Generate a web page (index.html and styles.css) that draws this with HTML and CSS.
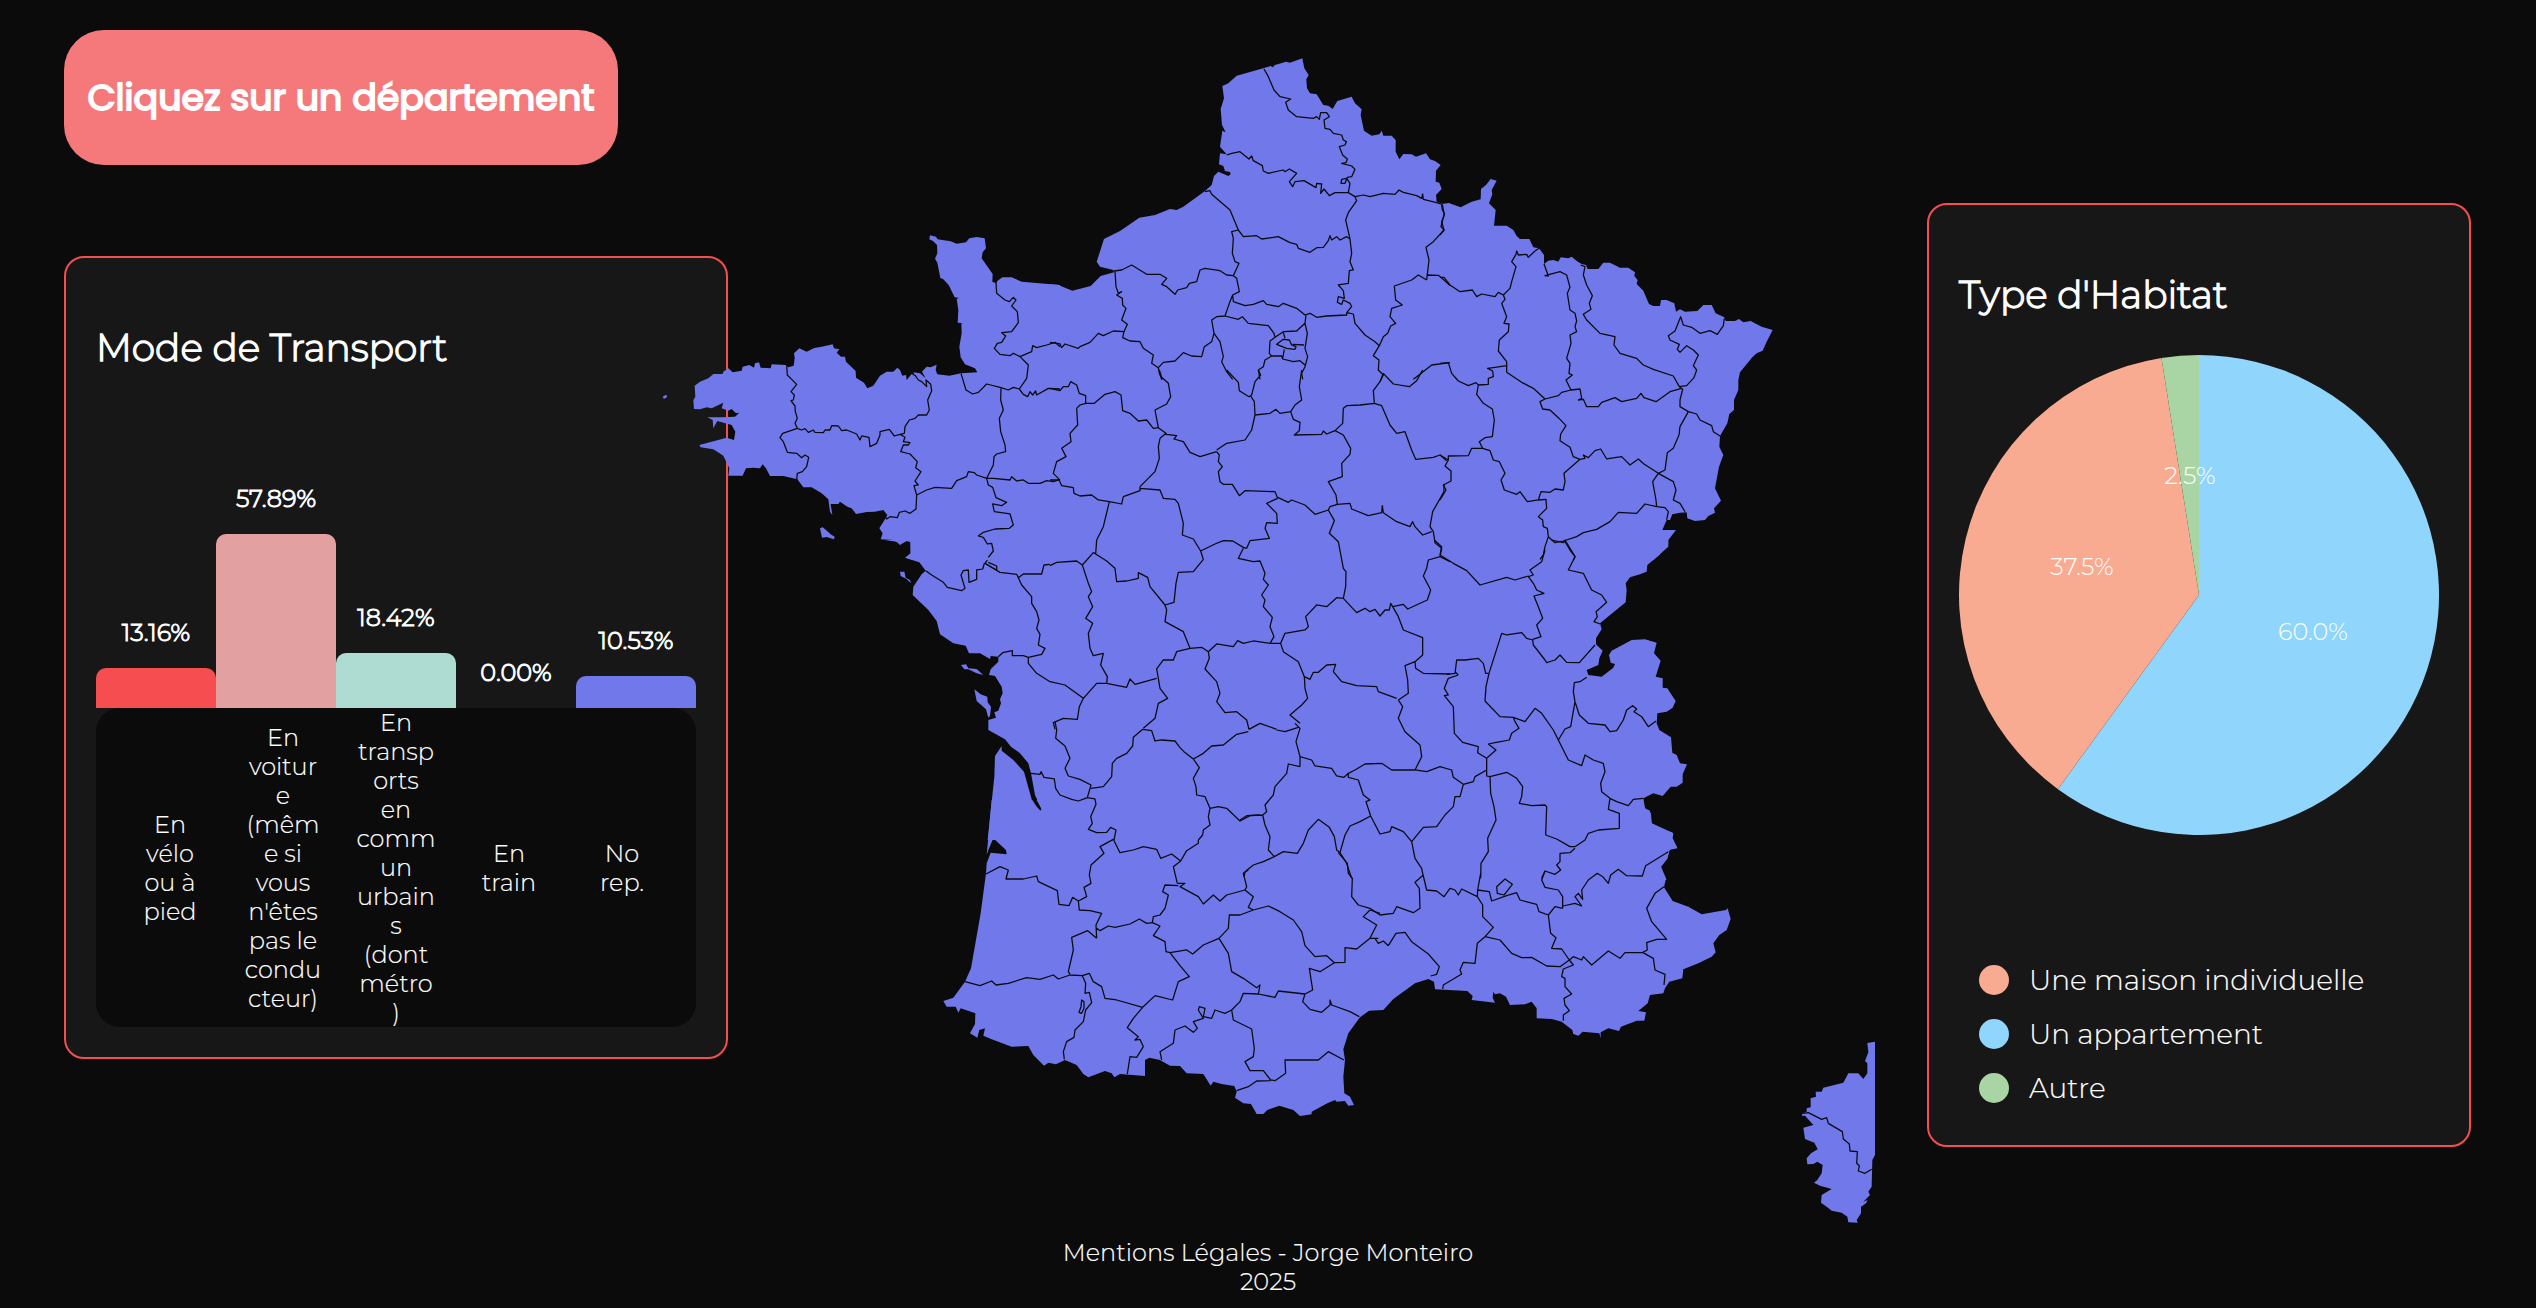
FILE: index.html
```html
<!DOCTYPE html>
<html lang="fr">
<head>
<meta charset="utf-8">
<title>Carte des départements</title>
<link rel="stylesheet" href="styles.css">
</head>
<body>
<main class="page">
  <section class="side">
    <h1 class="prompt"><span>Cliquez sur un département</span></h1>
    <article class="card transport">
      <h2 class="card-title">Mode de Transport</h2>
      <div class="bars">
        <div class="bar-col"><span class="bar-value">13.16%</span><div class="bar bike" style="height:40px"></div></div>
        <div class="bar-col"><span class="bar-value">57.89%</span><div class="bar car" style="height:174px"></div></div>
        <div class="bar-col"><span class="bar-value">18.42%</span><div class="bar transit" style="height:55px"></div></div>
        <div class="bar-col"><span class="bar-value">0.00%</span><div class="bar train" style="height:0"></div></div>
        <div class="bar-col"><span class="bar-value">10.53%</span><div class="bar none" style="height:32px"></div></div>
      </div>
      <div class="bar-labels">
        <span>En<br>vélo<br>ou à<br>pied</span>
        <span>En<br>voitur<br>e<br>(mêm<br>e si<br>vous<br>n'êtes<br>pas le<br>condu<br>cteur)</span>
        <span>En<br>transp<br>orts<br>en<br>comm<br>un<br>urbain<br>s<br>(dont<br>métro<br>)</span>
        <span>En<br>train</span>
        <span>No<br>rep.</span>
      </div>
    </article>
  </section>

  <svg class="map" viewBox="660 40 1215 1195" width="1215" height="1195">
    <g class="land">
      <path transform="translate(660 200) scale(.33333)" d="M1200,255 1085,245 1055,232 1027,232 1013,242 1008,250 997,245 998,222 965,175 968,157 978,145 974,115 950,111 928,115 918,127 890,131 872,124 833,118 828,110 810,106 808,118 820,124 831,135 832,160 825,176 832,188 841,234 850,238 866,255 884,292 897,294 890,297 895,330 893,368 914,370 904,369 905,400 898,440 902,472 915,493 945,505 952,517 903,520 868,527 832,523 827,510 830,494 812,502 800,500 786,515 797,535 780,520 760,517 767,530 755,522 740,540 738,525 727,527 720,510 712,503 700,515 680,515 660,527 640,557 622,565 612,548 588,533 587,513 558,485 555,470 543,470 530,458 538,448 522,445 518,433 485,440 463,444 440,455 418,445 402,460 404,475 401,497 385,502 378,495 335,493 332,505 302,503 297,487 285,490 282,503 268,495 248,500 245,512 218,517 205,505 190,515 188,522 160,522 145,535 120,545 104,557 106,590 100,600 102,627 120,628 140,622 155,625 190,608 185,625 205,632 215,627 228,640 238,638 225,650 180,652 142,652 158,660 160,685 172,663 215,675 226,695 222,720 200,713 118,735 122,742 160,748 190,767 208,805 205,827 248,827 258,805 280,803 300,805 308,793 318,805 330,828 370,828 412,838 430,862 455,862 485,880 505,898 510,935 517,945 512,912 535,912 540,905 562,920 575,925 588,942 620,936 645,935 670,930 682,945 675,958 658,985 668,1000 662,1018 700,1020 720,1032 735,1022 751,1025 752,1060 737,1073 760,1080 1200,1080ZM8,590 18,584 22,590 12,597ZM480,985 488,982 504,995 512,1003 524,1010 522,1018 500,1011 486,1013Z"/>
      <path transform="translate(1050 40) scale(.33333)" d="M0,733 25,735 67,752 122,738 152,708 192,697 190,690 150,680 140,665 162,597 210,573 268,533 315,525 360,507 380,510 400,500 465,453 485,435 492,408 505,395 535,408 542,403 540,396 525,393 520,378 507,373 510,340 530,343 510,320 517,272 527,277 516,255 512,207 522,175 517,138 535,130 560,107 640,85 662,78 668,82 675,75 708,65 720,68 757,55 763,85 776,105 769,118 771,145 780,160 800,163 820,195 835,197 848,207 862,183 905,170 915,190 935,208 932,225 942,272 965,287 988,283 995,272 1000,287 1025,287 1037,300 1037,335 1048,358 1060,342 1085,343 1098,350 1128,340 1140,358 1155,363 1172,375 1158,392 1157,425 1168,428 1175,447 1158,465 1160,485 1180,493 1200,490 1200,1035 0,1035Z"/>
      <path transform="translate(1440 160) scale(.33333)" d="M0,132 28,130 62,142 95,125 122,118 123,87 138,75 152,57 170,62 155,90 157,103 147,130 167,150 162,197 200,197 220,210 230,228 240,237 268,237 280,262 297,265 312,285 312,312 325,302 340,300 355,305 362,292 385,295 395,290 410,303 425,312 438,315 443,327 475,327 490,308 510,308 540,323 565,323 585,337 583,348 593,360 590,372 610,392 627,432 640,438 660,438 663,420 680,420 703,430 708,455 720,448 735,455 772,453 790,435 815,435 827,460 853,472 857,483 885,483 897,477 910,487 932,483 965,500 998,510 980,545 968,572 950,580 937,592 900,637 895,660 895,690 882,720 882,750 868,762 862,790 840,828 838,860 850,885 837,920 825,985 843,1022 822,1045 825,1058 805,1068 795,1080 765,1083 742,1075 740,1057 720,1058 697,1063 690,1080 680,1080 667,1110 708,1110 685,1140 685,1160 640,1200 0,1200Z"/>
      <path transform="translate(1050 370) scale(.33333)" d="M0,0H1210V1080H0Z"/>
      <path transform="translate(860 540) scale(.33333)" d="M75,0 110,5 120,15 140,3 152,5 152,40 135,53 178,67 197,92 185,103 160,140 158,165 205,210 230,243 240,283 280,310 317,317 327,340 360,340 390,357 392,348 415,350 415,365 392,388 387,405 405,408 425,440 428,460 420,478 423,490 415,512 403,517 408,533 385,540 385,570 435,598 453,620 480,640 505,670 513,700 525,765 545,808 540,813 517,785 492,695 460,660 425,632 425,618 405,648 403,710 383,900 1200,900 1200,0ZM303,375 318,373 325,385 350,387 370,405 350,400 325,388 313,388ZM343,448 362,463 382,470 383,487 393,500 390,527 385,533 378,508 350,483ZM120,95 133,95 137,113 150,120 153,130 140,117 122,108Z"/>
      <path transform="translate(1240 540) scale(.33333)" d="M0,0 1283,0 1285,10 1258,45 1222,75 1220,95 1200,103 1170,112 1157,130 1160,150 1157,187 1080,250 1085,268 1068,295 1068,313 1088,332 1078,355 1075,375 1040,390 1045,405 1085,410 1120,383 1125,372 1112,368 1107,345 1115,332 1175,300 1215,298 1250,308 1242,340 1262,362 1247,410 1268,415 1268,443 1282,445 1307,483 1298,503 1280,515 1252,520 1250,550 1258,570 1293,592 1297,638 1310,645 1320,670 1341,673 1328,703 1328,728 1310,740 1292,740 1268,768 1240,760 1210,775 1215,805 1230,812 1235,850 1275,868 1300,880 1298,895 1312,925 1287,930 1283,955 1263,980 1270,1005 1280,1020 0,1020Z"/>
      <path transform="translate(920 800) scale(.33333)" d="M215,0 337,0 350,20 362,33 365,27 350,0 1380,0 1380,628 1350,630 1320,652 1285,700 1270,748 1275,780 1270,830 1273,880 1290,890 1302,915 1285,917 1275,903 1250,905 1245,900 1222,910 1175,935 1175,943 1140,948 1120,930 1078,917 1042,930 1030,942 1010,942 993,912 970,910 945,893 950,875 943,858 905,852 880,845 872,857 850,822 800,820 780,798 750,797 720,780 688,773 675,780 675,828 600,822 583,832 575,820 555,813 505,832 490,822 470,795 435,780 408,793 385,788 372,797 340,765 325,738 275,740 215,718 190,707 195,685 178,690 172,713 150,700 165,672 166,640 122,625 115,638 107,620 80,620 70,603 100,593 135,545 153,505 182,340 198,220 200,190 212,158 260,163 258,150 220,115 205,150 200,165Z"/>
      <path transform="translate(1360 800) scale(.33333)" d="M0,0 847,0 857,30 873,40 875,70 910,90 937,97 935,112 952,143 930,148 922,175 903,200 918,235 912,262 938,303 985,320 1025,343 1098,330 1103,325 1112,357 1100,390 1078,405 1060,430 1067,457 1055,470 1015,490 970,508 967,535 928,545 915,565 910,580 870,585 863,610 835,633 858,637 853,662 830,662 783,680 777,693 745,685 722,697 722,715 718,700 668,695 655,707 640,702 637,690 605,665 575,657 530,655 530,625 515,605 495,613 450,615 438,590 420,580 405,583 400,575 398,593 405,608 335,600 338,588 322,573 225,568 222,545 205,537 165,550 100,597 70,630 25,632 0,650Z"/>
      <path transform="translate(1780 1020) scale(.33333)" d="M262,69 285,65 285,405 277,420 275,500 265,515 270,525 250,545 263,540 258,550 243,560 243,580 230,600 233,608 205,607 202,590 185,578 155,572 140,560 123,548 125,525 155,507 120,497 102,488 112,480 125,460 128,435 112,425 100,432 82,433 80,415 93,400 113,388 103,368 75,357 70,323 100,315 75,287 65,287 68,280 80,275 80,265 92,262 92,235 108,230 107,215 125,215 130,203 190,188 205,160 235,160 250,177 262,160 262,130 255,123 265,97Z"/>
    </g>
    <g class="borders">
      <!-- Bretagne, Normandie -->
      <path transform="translate(660 200) scale(.33333)" d="M380,495 382,525 395,538 410,553 393,575 403,585 400,600 393,602 405,618 406,635 412,655 405,670 412,685M412,685 368,700 360,713 370,725 382,757 410,760 425,773 435,765 446,772 440,800 427,815 412,820 410,840M412,685 425,690 435,686 445,697 460,690 465,697 490,698 495,690 510,690 515,677 535,678 545,692 560,690 590,702 600,720 605,708 627,712 630,740 650,730 660,705 660,695 688,688 703,708 720,703M720,703 733,700 735,680 748,660 765,655 775,645 800,645 808,630 803,600 815,572 812,553 798,540 800,560 785,545 775,540 765,525M720,703 735,712 730,725 750,728 745,735 730,735 722,755 750,762 772,785 767,803 783,815 765,843 775,855 762,857 770,885M770,885 768,927 750,940 735,933 718,937 712,953 690,950 680,957 672,943M770,885 800,870 825,862 875,865 890,842 920,830 925,815 943,818 950,825 980,835M903,520 918,570 938,582 955,577 980,552 1023,563M1023,563 1022,600 1030,630 1018,655 1022,695 1035,735 1037,755 1010,762 1002,770 1000,795 985,825 980,835M1008,247 1010,280 1035,300 1048,305 1060,292 1068,300 1055,318 1072,335 1075,368 1055,395 1025,398 1037,408 1025,427 1012,430 1003,445 1020,463 1050,467 1060,460 1080,470M1080,470 1105,495 1100,535 1078,567M1023,563 1045,570 1060,562 1078,567M1078,567 1090,583 1103,590 1110,575 1118,585 1127,573 1130,585 1165,565 1200,567M1080,470 1115,455 1118,437 1130,443 1160,435 1185,427 1200,440M980,835 1000,835 1050,840 1055,830 1070,843 1090,840 1105,850 1140,850 1160,842 1180,845 1200,838M980,835 985,855 998,862 1008,893 1040,907 1025,917 998,912 1003,935 1050,942 1060,975 1048,985 1005,987 970,997 955,1008 970,1012 982,1032 995,1030 1000,1053 985,1072"/>
      <!-- Hauts-de-France, Île-de-France -->
      <path transform="translate(1050 40) scale(.33333)" d="M642,87 655,110 672,150 690,170 722,177 707,187 715,210 740,230 790,235 800,230 808,238 812,218 830,218 838,230 822,240 825,265 840,268 850,280 875,285 880,300 889,305 885,315 868,320 878,345 892,357 888,368 875,370 905,378 915,388 905,410 892,412 885,430 873,430 875,418 890,415 900,430 895,458M530,345 545,340 570,335 597,357 605,348 610,362 637,377 640,393 655,400 700,390 705,395 718,387 740,400 718,425 728,440 735,425 762,422 798,443 800,430 815,432 812,460 822,447 838,467 855,458 895,458M895,458 915,470 940,465 960,470 1000,460 1035,463 1047,450 1060,457 1100,467 1115,475 1118,462 1120,478 1160,488 1177,493M465,455 480,452 485,463 540,510 565,570M565,570 580,590 620,587 635,597 685,590 720,608 740,613 745,625 780,637 800,623 820,622 835,602 840,587 845,600 860,590 870,600 890,590 900,597M915,470 920,482 895,518 887,540 895,575 900,597M900,597 905,640 900,665 910,690 898,692 895,730 865,735 880,752 883,775 865,770 862,787 875,793 880,780 900,790 905,800 890,818M565,570 545,575 550,595 547,640 555,665 567,670 550,707M192,693 215,690 245,675 290,703 330,703 350,715 335,733 350,740 375,763 383,750 410,743 418,730 440,725 450,690 465,685 510,692 530,705 550,707M550,707 560,715 568,755 548,765 550,785M550,785 585,797 610,793 640,782 650,793 685,800 700,790 740,805 765,825M765,825 780,820 800,832 830,828 890,825 890,818M195,695 198,740 205,760 215,755 200,765 217,775 218,795 228,805 215,840 232,853 222,875M0,907 30,912 35,923 45,912 85,925 90,920 120,907 145,880 160,887 190,873 222,875M222,875 218,893 240,903 270,905 280,925 310,945 305,970 325,983M325,983 340,967 375,963 400,938 425,948 455,950 463,920 485,905 492,880M548,765 538,790 525,828M492,880 485,840 500,830 525,828M525,828 565,838 577,830 595,850 655,857 672,880 675,892M492,880 510,905 520,950 515,965 530,995 548,1018M325,983 328,1000 336,1020M675,892 700,875 740,873 765,850 768,825M675,892 660,903 658,940 665,948M680,913 700,898 718,900 725,915 738,920 735,928 710,925ZM700,878 705,895M728,913 762,915M703,928 698,955M665,948 645,960 640,980 625,990 630,1018M665,948 695,948 698,957 730,965 750,962 765,975M765,850 772,880 765,925 773,950 765,980 755,1000 758,1018M890,818 910,822 915,850 945,885 975,905 988,917M988,917 1000,890 1013,880 1022,858 1037,850 1020,830 1025,805 1057,795 1037,780 1033,738 1085,720 1105,705 1130,720M1177,493 1183,525 1175,545 1182,570 1150,605 1128,622 1137,660 1130,720M1130,705 1165,706 1182,720 1200,737M988,917 970,947 987,960 985,990 1000,1005 990,1025M1090,1018 1110,1003 1145,975 1200,968"/>
      <!-- Grand Est, Franche-Comté -->
      <path transform="translate(1440 160) scale(.33333)" d="M5,135 7,150 13,160 3,200 12,210 0,225M297,265 285,273 265,292 260,283 235,285 230,273 228,283 215,305 228,320 215,365 210,385 190,405M0,352 12,352 30,375 60,395 97,390 110,410 125,402 165,410 175,397 190,405M190,405 195,418 185,430 200,470 192,490 207,492 205,515 178,540 175,573 200,605M312,312 325,348 315,347 360,335 380,345 390,382 382,400 390,450 405,460 410,483 405,500 410,515 390,525 393,550 380,595 390,610 387,640 397,645 378,660 393,690M422,315 435,320 430,345 440,375 457,407 448,430 453,448 430,463 440,480 480,520 525,530 522,555 540,580 590,595 610,615 640,628 700,648 718,680M853,475 850,497 832,523 810,512 780,520 755,502 730,495 722,470 705,513 685,527 690,540 718,553 712,568 720,577 740,557 760,570 775,585 760,617 770,630 762,653 740,677 718,680M200,605 200,637 245,667 280,685 315,717M315,717 355,707 365,697 393,690M0,610 25,608 35,640 55,663 85,677 108,668 115,675M115,675 145,673 145,655 160,650 158,633 143,625 165,622 200,617M393,690 420,687 425,715 415,720 430,718 440,740 475,740 485,727 525,713 545,725 590,715 603,700 612,713 648,725 690,695 725,685M718,680 728,688 720,720 720,740 745,755M745,755 770,762 780,780 815,797 820,815 840,828M745,755 720,800 717,825 700,865 682,878 675,930 655,940M315,717 300,725 308,747 330,750 355,773 378,797 362,822 360,842 390,862 400,890 420,898M420,898 435,895 430,885 445,893 465,872 482,867 500,897 545,890 570,915 595,897 612,912 655,940M115,675 110,703 130,730 157,747 163,780 157,830 135,833 118,845 128,865M0,885 25,900 25,888 85,887 95,865 128,865M128,865 150,872 160,900 178,905 195,940 183,960 193,990 230,1003 240,995 262,1025 295,1020M420,898 372,940 375,965 370,990 345,987 330,997 303,995 295,1020M295,1020 318,1018 320,1045 295,1070 308,1080 310,1100 322,1105 325,1130M325,1130 345,1148 370,1143 410,1130 430,1118 470,1108 510,1085 535,1057 590,1060 615,1032 650,1040M655,940 638,965 648,1020 650,1040M655,940 700,965 708,990 700,1020 720,1030 735,1055M650,1040 675,1043 685,1055 680,1080M325,1130 315,1160 310,1185 300,1198M375,1145 390,1170 405,1190 400,1200M25,900 15,918 33,933 33,963 10,975 18,990 0,1020"/>
      <!-- Centre, Pays de la Loire, Bourgogne -->
      <path transform="translate(1050 370) scale(.33333)" d="M0,55 30,62 40,50 55,50 62,35 80,45 88,70 107,77 107,100M107,100 90,105 80,115 83,165 60,190 63,215 35,235 48,260 20,275 10,310 25,325M0,330 25,330M107,100 133,100 165,73 195,65 213,75 218,122 240,130 265,153 290,150 310,175 325,173M328,0 335,22 355,40 362,80 350,102 315,120 325,173M325,173 348,190 330,205M348,193 380,197 372,207 400,215 420,247 450,260 500,245M330,205 325,230 328,265 315,305 270,350M25,325 35,347 70,353 72,370 90,378 125,375 145,390 178,395M178,395 215,402 220,380 270,362 270,350M270,355 330,360 340,385 375,388 385,400 400,460 397,495 430,507 452,543M178,395 160,470 140,510 137,552M500,245 508,255 505,275 517,290 505,305 510,335 520,343 547,343 568,377 585,362 675,365 683,385M500,240 530,220 585,210 605,180 615,135M530,0 565,37 568,62 597,80 605,75 615,35 632,15 625,0M602,78 613,95 615,135M615,135 660,130 678,118 690,130 722,125M755,0 748,50 755,90 735,105 722,125M722,125 730,148 750,157 748,182 733,195 815,193 820,183 830,192 855,182M855,182 878,160 880,115 890,107 930,105 973,100M1000,10 990,35 970,62 973,100M1000,10 1030,42 1078,50 1100,32 1118,0M973,100 995,107 1020,165 1040,190 1065,185 1085,240 1097,268 1150,262 1170,255 1190,272M855,182 880,195 902,235 900,253 875,280 877,320 835,335 858,375 862,403M683,382 715,397 725,390 765,405 795,433 835,420 840,410 862,403M683,385 650,400 680,430 682,460 650,458 645,475 658,505 600,512 590,535M452,543 495,522 520,512 548,513 580,532 590,535M862,403 900,400 905,417 955,437 995,428 997,407 1000,428 1040,455 1080,470 1088,455 1095,470 1118,495 1145,485M1182,342 1182,365 1148,425 1140,470 1150,485M1150,485 1155,518 1175,535 1170,560M1170,560 1135,570 1130,595 1120,618 1142,660 1132,690 1073,717 1060,703 1028,710M1170,560 1200,575M835,420 853,452 838,490 865,515 880,595 888,605 887,650 880,685M580,535 565,565 610,575 630,573 645,610 640,628 655,645 635,675 645,690 640,710 667,742 660,770 672,800 660,820M452,543 460,568 430,605 385,607 378,640 372,697 345,705M137,552 170,573 195,595 200,635 230,633 265,625 265,608 293,622 300,650 345,705M0,587 20,577 80,573 97,585M97,585 130,548 137,552M97,585 115,640 125,665 115,680 128,710 107,745 128,760 115,790 120,835 130,857 160,850 152,885 172,920 170,940M345,705 350,720 345,755 400,785 420,835M170,940 230,952 240,927 255,943 320,925M420,835 380,845 370,870 340,870 320,897 325,925M420,835 455,832 475,845 500,822 550,830 563,812 580,820 610,813 660,820 692,820M692,820 705,790 765,780 775,770 767,740 800,705 830,710 860,683 880,685M880,685 920,728 945,715 960,725 975,718 990,738 1005,720 1018,720 1022,700 1028,710M1028,710 1045,740 1060,780 1118,803 1118,855 1095,875M692,820 700,845 745,875 763,920M763,920 780,928 790,907 805,907 830,885 857,883 850,905 875,935 920,947 980,950 985,965 1040,985M1095,875 1065,887 1073,930 1075,970 1045,990M1095,875 1097,895 1120,910 1200,912M475,845 478,865 465,897 500,935 510,970 500,995 525,1028 560,1025 590,1050 597,1078M763,920 765,955 773,985 755,1005 720,1035 750,1060M597,1078 630,1060 680,1078M0,935 45,945 100,985M100,985 140,940 170,940M100,985 88,1010 82,1048 40,1045 10,1058 15,1078M325,925 330,955 353,985 325,1000 315,1045 280,1075"/>
      <!-- Vendée, Charentes, Dordogne -->
      <path transform="translate(860 540) scale(.33333)" d="M197,92 215,105 250,127 262,142 305,152 315,145 303,105 310,92 325,90 327,127 350,118 350,90 368,87 373,70M382,60 375,70 410,90 410,78 385,67M375,70 420,97 470,103 475,113M475,113 490,102 545,102 552,75 570,73M475,113 485,135 515,170 515,190 530,215 537,240 530,265 540,283 535,315 555,325 545,343 505,352M415,350 428,338 457,332 457,347 490,347 505,352M505,352 505,370 530,400 570,425M585,545 590,570 587,595 615,618 630,655 615,685 625,708M513,700 540,703 543,695 552,712 583,717 587,745 600,765 635,778 655,783 682,773M625,708 660,718 693,735 682,773M693,745 730,740 755,710 757,670 770,655 800,640 818,618 820,592 848,568M682,773 705,777 708,793 692,830 697,850 685,868 710,878 740,877 752,862 768,870 762,900M848,568 875,572 885,603 905,600 945,603 960,623 972,635 1000,657M1000,657 1030,640 1055,618 1090,615 1130,583 1165,575M1000,657 1018,683 1000,715 1008,740 1010,765 1035,770 1050,805M1050,805 1075,800 1100,805 1140,843 1170,827 1200,825M1050,805 1045,830 1050,855 1030,870 1028,885 1015,900"/>
      <!-- Auvergne, Rhône-Alpes -->
      <path transform="translate(1240 540) scale(.33333)" d="M165,550 180,565 168,605 180,650 180,680M110,570 135,575 175,562M180,650 215,660 225,678 275,685 290,708 312,712 325,700M180,680 145,672 140,700 105,740 100,765 75,795 80,815 68,825M0,840 20,827 68,825M68,825 75,855 90,890 85,930 103,950M103,950 130,935 172,940 190,910 205,870 235,838 268,862 283,890 290,930 300,938M103,950 70,965 40,975 15,995 12,1010M325,700 345,690 375,672 425,670 455,690 525,690M325,700 325,712 355,720 370,765 390,780 378,785 392,828M392,828 360,845 330,858 315,885 300,938M392,828 420,882 450,875 455,860 490,875 515,905M300,938 320,970 335,1015M515,905 525,955 545,985 550,1010M525,690 560,695 600,680 635,690 640,712 670,733M670,733 660,770 645,770 640,800 615,825 590,860 550,862 515,905M475,480 488,500 475,535 495,575 540,615 545,650 525,690M655,405 625,415 613,445 625,465 613,467 640,500 643,580 668,607 715,620 713,638 740,655M620,403 645,400 650,360 675,360 715,355 730,370 737,400 745,400M655,405 645,395M785,280 747,400 738,440 735,483 780,530 820,532M785,280 800,285 845,278 860,295 878,300M820,532 825,545 837,565 815,580 808,600 765,608 745,612 768,630 740,655M820,532 855,545 885,505 905,520 940,570 955,600M670,733 700,725 705,710 740,690M740,655 740,708 750,710M750,710 752,760 762,800 768,840 743,895 745,935 723,970 722,1015M750,710 800,697 830,715 848,740 845,770 838,790 875,797 915,795 920,800 917,885M917,885 950,897 990,920 1005,920M1005,920 1035,900 1045,880 1075,870 1138,865 1138,820 1105,808 1110,775M1110,775 1130,785 1165,797 1180,778 1210,775M955,600 985,660 1025,677 1035,645 1060,660 1090,670 1095,695 1082,730 1085,755 1110,775M955,600 975,567 992,560 1005,485M1005,485 1000,455 1003,428 1020,425 1040,412M1005,485 1018,525 1045,550 1095,555 1110,575 1130,572 1150,540 1160,510 1178,497 1190,507 1182,515 1205,530 1225,560 1248,543M865,110 880,105 870,90 905,65 915,30M865,110 880,130 890,150 912,160 882,168 895,200 908,235 890,255 903,290 878,298M600,45 640,70 680,92 720,135 800,112 825,120 865,108M583,0 605,20 600,45M935,0 970,8 975,0M975,0 1005,50 985,90 1030,100 1055,150 1085,165 1100,187 1068,215 1072,230 1062,245 1080,252M878,298 880,315 915,360 920,368 945,360 960,345 980,367 1018,368 1065,315M1005,925 990,938 960,940 960,965 950,975 962,990 945,1003 915,993 905,1015"/>
      <!-- Aquitaine, Midi-Pyrénées -->
      <path transform="translate(920 800) scale(.33333)" d="M198,222 240,200 265,210 258,237 310,237 350,228 355,245 412,272 417,313 447,317 458,292 475,303M475,303 500,290 492,262 513,250 508,225 513,195 552,160 540,140 580,118M580,118 600,158 640,150 670,140 710,148 722,175 755,162 782,183M835,120 835,130 800,152 782,183M782,183 760,200 772,250M772,250 795,250 780,260 835,290 850,312 880,285 900,303 920,285 975,270M775,257 735,255 728,275 745,285 735,325 720,345 700,350 697,368M697,368 680,370 658,357 630,372 585,382 565,378 540,392 530,385M475,303 478,330 510,332 545,340 528,375 530,415M530,415 503,392 455,412 460,450 445,515 450,523M135,545 180,557 215,543 228,555 265,550 320,533 360,538 400,525 415,537 450,525 487,527M487,527 497,550 495,580 508,577 515,608 497,630 490,665 465,690 462,712 440,725 430,755 433,778M485,600 492,605 492,625 485,640 477,637 483,620ZM487,527 508,520 520,545 545,560 555,595 590,600 668,622M668,622 705,587 758,600 775,545 808,530 780,497 750,458M668,622 640,655 622,683 655,710 645,720 660,718 670,740 650,772 630,770 622,822M750,458 738,455 735,425 700,407 720,378 697,368M750,458 800,450 818,462 850,435 897,415M897,415 925,385 928,345 960,345 1000,330M975,270 1000,290 985,322 1000,330M975,270 980,260 970,220 985,210M1000,330 1045,318 1080,335 1120,360 1145,395 1155,437 1185,470 1220,467 1243,488M897,415 925,460 935,515 970,535 1010,563 1020,555 1015,582M1015,582 970,580 960,605 935,630M1015,582 1065,592 1075,573 1155,582M1155,582 1178,570 1168,505 1200,515 1243,488M1155,582 1148,605 1170,628 1205,637 1230,615 1230,600 1235,615 1290,635 1318,650M1243,488 1275,487 1275,443 1310,447 1350,415 1375,415M1350,415 1370,375 1330,350 1350,330 1380,340M1255,158 1282,190 1285,220 1297,235 1295,290 1315,315 1350,325M935,630 915,640 885,630 875,655 850,650 855,625 838,620 835,630 850,655 820,665 832,685 820,697 795,678 765,690 760,730 720,755 725,780M935,630 940,660 995,687 1003,745 1000,770 975,785 990,812 1030,812 1052,840M1052,840 1065,842 1097,820 1095,780 1195,780 1225,755 1272,780M1052,842 1010,843 985,860 950,872"/>
      <!-- Languedoc, Provence -->
      <path transform="translate(1360 800) scale(.33333)" d="M190,225 165,247 178,265 180,325 160,338 110,320 100,340 60,345 30,325M45,415 55,430 70,423 85,437M85,437 108,400 135,397 155,425 205,462 238,500 230,523 212,528M190,228 200,270 230,273 252,290 270,265 285,270 295,285 305,267 352,290M362,220 353,270 352,290M352,290 368,315 368,350 400,382 375,410M353,270 388,275 395,303 440,287 470,278 480,300 530,313 537,335 565,345M432,285 412,280 410,260 435,237 457,253 440,275 432,285M375,410 352,430 345,490 310,487 300,510 305,522 250,555 248,567M375,410 420,420 455,460 485,473 515,472 560,498 600,500 628,480M565,345 572,400 588,413 575,445 605,447 628,480M555,213 545,240 555,262 595,270 608,290 608,325M565,345 585,320 608,325M608,318 645,310 665,318 645,290 655,280 668,298 665,270 685,240 712,220 728,230 745,250 752,225 775,208 800,227 847,228 857,197 925,155M912,260 885,280 860,325 875,365 920,418 890,418 860,428 862,450 848,457M628,480 640,470 665,480 670,470 695,495 745,453 780,475 795,458 848,457M848,457 865,467 880,475 885,510 915,523 912,555M628,480 640,495 610,507 605,530 615,535 615,560 635,582 612,595 615,615 628,632 610,645 610,662"/>
      <!-- Corse -->
      <path transform="translate(1780 1020) scale(.33333)" d="M68,280 85,278 125,298 140,293 145,310 187,335 190,357 208,372 210,393 232,395 230,430 238,437 235,453 255,460 275,448"/>
    </g>
  </svg>

  <article class="card housing">
    <h2 class="card-title">Type d'Habitat</h2>
    <svg class="pie" viewBox="-240 -240 480 480" width="480" height="480">
      <path class="flat" d="M0,0V-240A240,240 0 1 1 -141.07,194.16Z"/>
      <path class="house" d="M0,0L-141.07,194.16A240,240 0 0 1 -37.54,-237.05Z"/>
      <path class="other" d="M0,0L-37.54,-237.05A240,240 0 0 1 0,-240Z"/>
      <text x="114" y="45">60.0%</text>
      <text x="-117" y="-20">37.5%</text>
      <text x="-9" y="-111">2.5%</text>
    </svg>
    <ul class="legend">
      <li><i class="dot house"></i><span>Une maison individuelle</span></li>
      <li><i class="dot flat"></i><span>Un appartement</span></li>
      <li><i class="dot other"></i><span>Autre</span></li>
    </ul>
  </article>
</main>
<footer class="footer">Mentions Légales - Jorge Monteiro<br><span>2025</span></footer>
</body>
</html>
```
FILE: styles.css
```css
* { box-sizing: border-box; }

body {
  margin: 0;
  height: 1308px;
  background: #0b0b0b;
  color: #fff;
  font-family: Montserrat, Inter, sans-serif;
  font-size: 24px;
  line-height: 29px;
  font-weight: 300;
  -webkit-text-stroke: 0.15px #fff;
  overflow: hidden;
}

.page {
  display: flex;
  align-items: flex-start;
  height: 1238px;
  padding: 0 65px 0 64px;
}

.side {
  flex: none;
  width: 664px;
  padding-top: 30px;
}

.prompt {
  display: flex;
  align-items: center;
  justify-content: center;
  width: 554px;
  height: 135px;
  margin: 0 0 91px;
  border-radius: 40px;
  background: #f5797b;
  font-family: Poppins, Inter, sans-serif;
  font-size: 36.4px;
  font-weight: 400;
  -webkit-text-stroke: 1.8px #fff;
  white-space: nowrap;
}

.card {
  border: 2px solid #f44e50;
  border-radius: 20px;
  background: #171717;
}

.card-title {
  margin: 0;
  font-size: 37.5px;
  line-height: 46px;
  font-weight: 300;
  -webkit-text-stroke: 1.3px #fff;
  white-space: nowrap;
}

.transport {
  display: flex;
  flex-direction: column;
  height: 803px;
  padding: 67px 30px 30px;
}

.bars {
  flex: 1;
  display: flex;
  align-items: flex-end;
}

.bar-col {
  flex: 1;
  display: flex;
  flex-direction: column;
  align-items: center;
}

.bar-value {
  margin-bottom: 21px;
  -webkit-text-stroke: 1px #fff;
}

.bar {
  width: 100%;
  border-radius: 10px 10px 0 0;
}

.bike { background: #f54d50; }
.car { background: #e3a0a1; }
.transit { background: #aedcd3; }
.none { background: #7078ea; }

.bar-labels {
  flex: none;
  display: grid;
  grid-template-columns: repeat(5, 113px);
  justify-content: center;
  align-items: center;
  height: 319px;
  border-radius: 24px;
  background: #0b0b0b;
  text-align: center;
}

.map {
  flex: none;
  position: relative;
  margin: 40px 0 0 -68px;
}

.land { fill: #7078ea; }

.borders {
  fill: none;
  stroke: #0b0b0f;
  stroke-width: 3.8;
  stroke-linejoin: round;
}

.housing {
  flex: none;
  width: 544px;
  height: 944px;
  margin: 203px 0 0 52px;
  padding: 67px 30px 0;
}

.pie {
  display: block;
  margin-top: 37px;
}

.pie text {
  fill: #fff;
  text-anchor: middle;
}

.pie .flat { fill: #90d5fc; }
.pie .house { fill: #f8ab91; }
.pie .other { fill: #a8d5a3; }

.legend {
  display: flex;
  flex-direction: column;
  gap: 24px;
  margin: 130px 0 0;
  padding: 0 0 0 20px;
  list-style: none;
  font-size: 28px;
}

.legend li {
  display: flex;
  align-items: center;
  gap: 20px;
  height: 30px;
}

.dot {
  width: 30px;
  height: 30px;
  border-radius: 50%;
}

.dot.house { background: #f8ab91; }
.dot.flat { background: #90d5fc; }
.dot.other { background: #a8d5a3; }

.footer { text-align: center; }
```
